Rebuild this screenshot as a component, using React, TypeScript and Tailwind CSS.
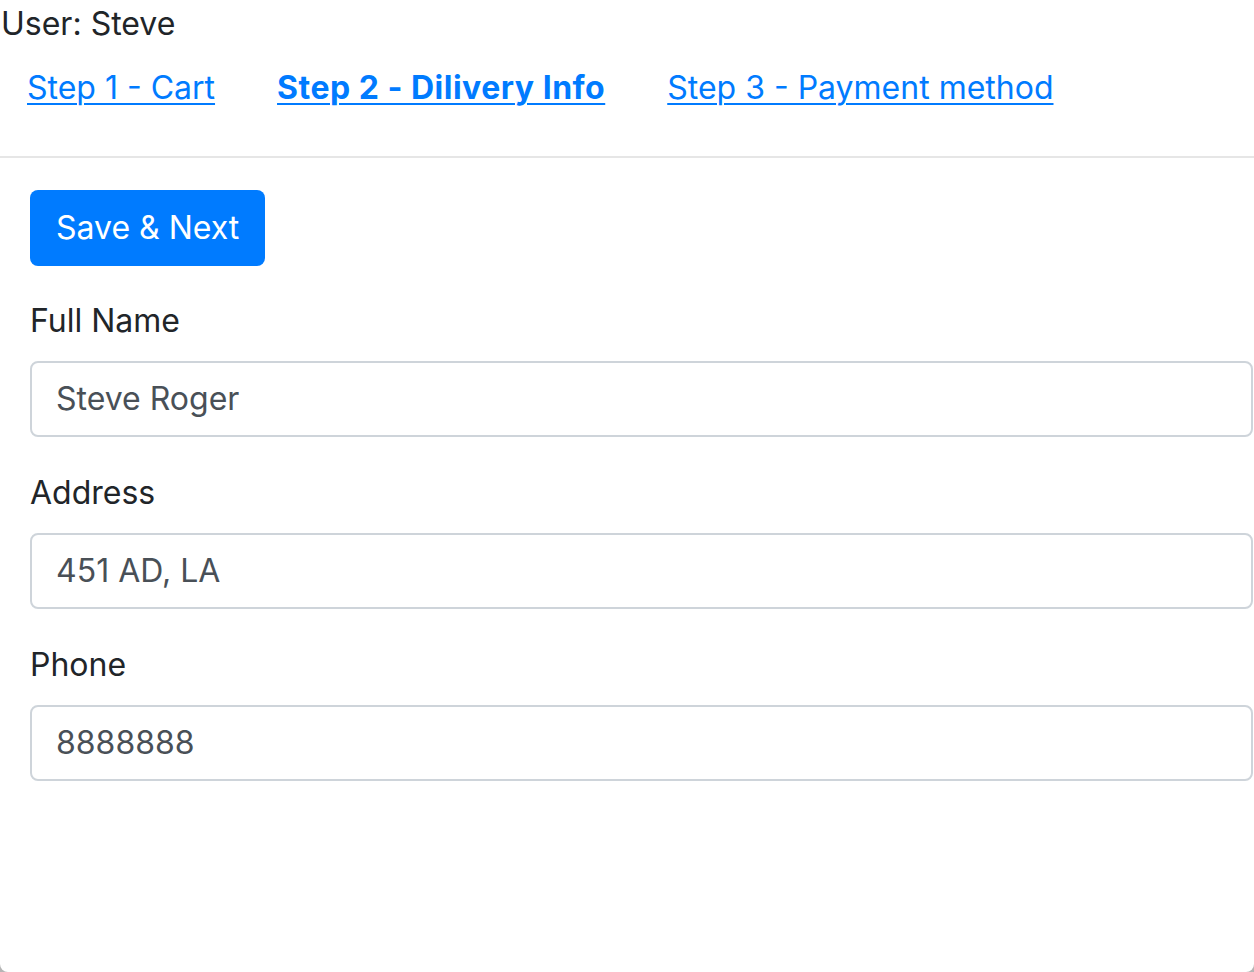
import React from "react";

const font = { fontFamily: "Inter, 'Noto Sans', Arial, sans-serif" };

function Field({ label, value }: { label: string; value: string }) {
  return (
    <div className="mb-8">
      <label className="block text-[32px] leading-[48px] text-[#212529] mb-4">{label}</label>
      <div className="w-[1223px] h-[76px] border-2 border-[#ced4da] rounded-[8px] bg-white flex items-center pl-[24px] text-[32px] leading-[48px] text-[#495057]">
        {value}
      </div>
    </div>
  );
}

export default function App() {
  return (
    <div className="w-[1254px] h-[972px] bg-[#b5b5b5] overflow-hidden" style={font}>
      <div className="w-full h-full bg-white rounded-b-[8px] overflow-hidden">
        <div className="text-[32px] leading-[48px] text-[#212529] pl-[1px]">User: Steve</div>
        <nav className="flex h-[80px] items-center pl-[27px] text-[32px] leading-[48px] text-[#007bff]">
          <a href="#" className="underline decoration-2 underline-offset-[4px]">Step 1 - Cart</a>
          <a href="#" className="ml-[62px] underline decoration-2 underline-offset-[4px] font-bold tracking-[0.5px]">Step 2 - Dilivery Info</a>
          <a href="#" className="ml-[62px] underline decoration-2 underline-offset-[4px]">Step 3 - Payment method</a>
        </nav>
        <div className="mt-[28px] h-[2px] bg-[#e6e6e6]" />
        <div className="pl-[30px] pt-[32px]">
          <button className="h-[76px] px-[26px] bg-[#007bff] text-white text-[32px] leading-[48px] rounded-[8px] mb-[31px]">
            Save &amp; Next
          </button>
          <Field label="Full Name" value="Steve Roger" />
          <Field label="Address" value="451 AD, LA" />
          <Field label="Phone" value="8888888" />
        </div>
      </div>
    </div>
  );
}
